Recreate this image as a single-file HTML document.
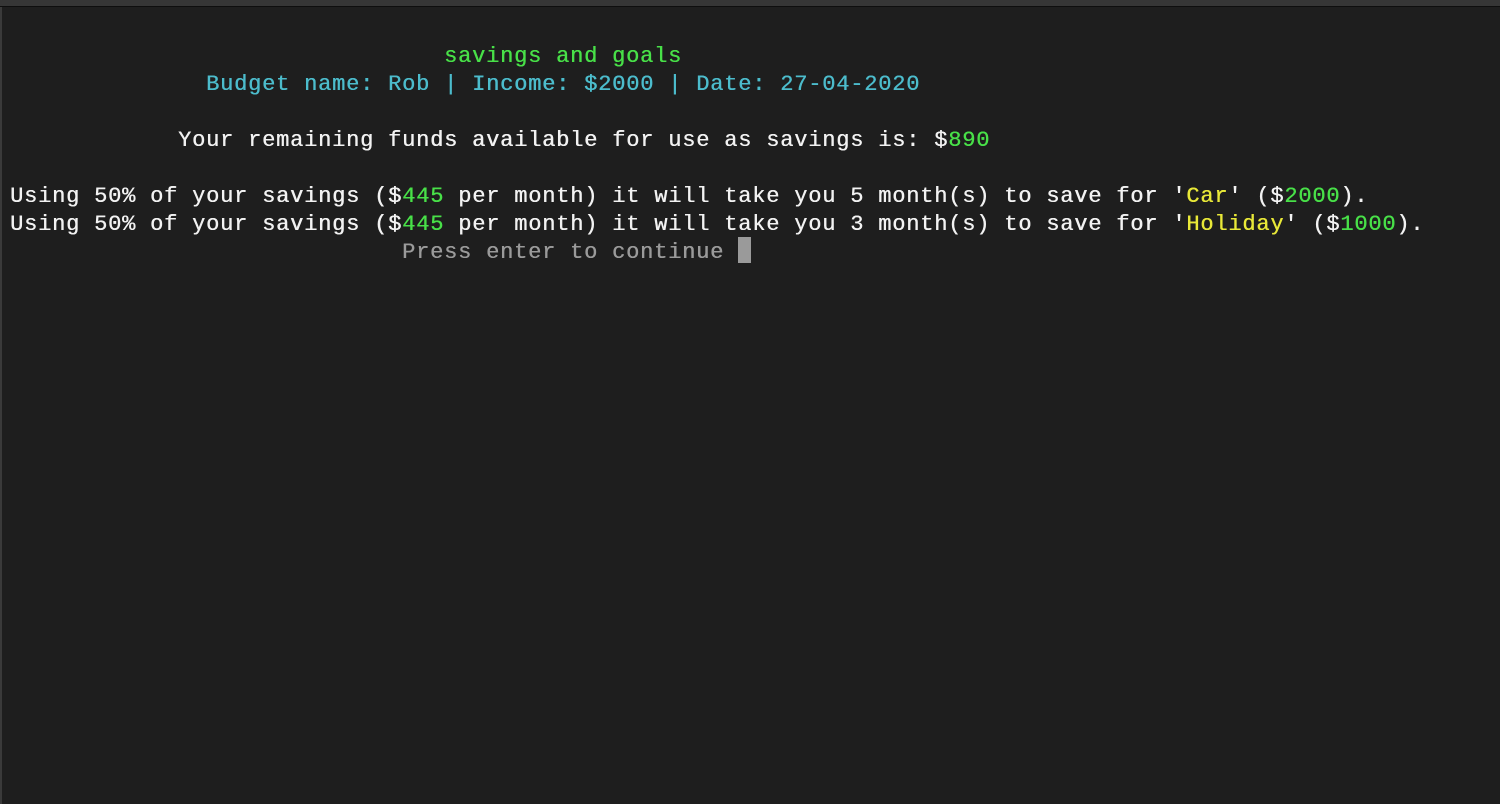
<!DOCTYPE html>
<html><head><meta charset="utf-8"><style>
html,body{margin:0;padding:0;}
body{width:1500px;height:804px;background:#1e1e1e;position:relative;overflow:hidden;
font-family:"Liberation Mono",monospace;font-size:22px;letter-spacing:0.8px;color:#f2f2f2;}
.bar{position:absolute;left:0;top:0;width:1500px;height:6px;background:#363636;border-bottom:1px solid #0e0e0e;}
.lb{position:absolute;left:0;top:7px;width:2px;height:797px;background:#3a3a3a;}
.l{position:absolute;left:10px;height:28px;line-height:28px;white-space:pre;text-shadow:0.4px 0 0 currentColor;}
.g{color:#48e048}.c{color:#4cbccc}.y{color:#e8e838}.d{color:#9a9a9a}
.cur{position:absolute;left:738px;top:237px;width:13px;height:26px;background:#9a9a9a;}
</style></head><body>
<div class="bar"></div><div class="lb"></div>
<div class="l g" style="top:43px;left:444px">savings and goals</div>
<div class="l c" style="top:71px;left:206px">Budget name: Rob | Income: $2000 | Date: 27-04-2020</div>
<div class="l" style="top:127px;left:178px">Your remaining funds available for use as savings is: $<span class="g">890</span></div>
<div class="l" style="top:183px">Using 50% of your savings ($<span class="g">445</span> per month) it will take you 5 month(s) to save for '<span class="y">Car</span>' ($<span class="g">2000</span>).</div>
<div class="l" style="top:211px">Using 50% of your savings ($<span class="g">445</span> per month) it will take you 3 month(s) to save for '<span class="y">Holiday</span>' ($<span class="g">1000</span>).</div>
<div class="l d" style="top:239px;left:402px">Press enter to continue</div>
<div class="cur"></div>
</body></html>
